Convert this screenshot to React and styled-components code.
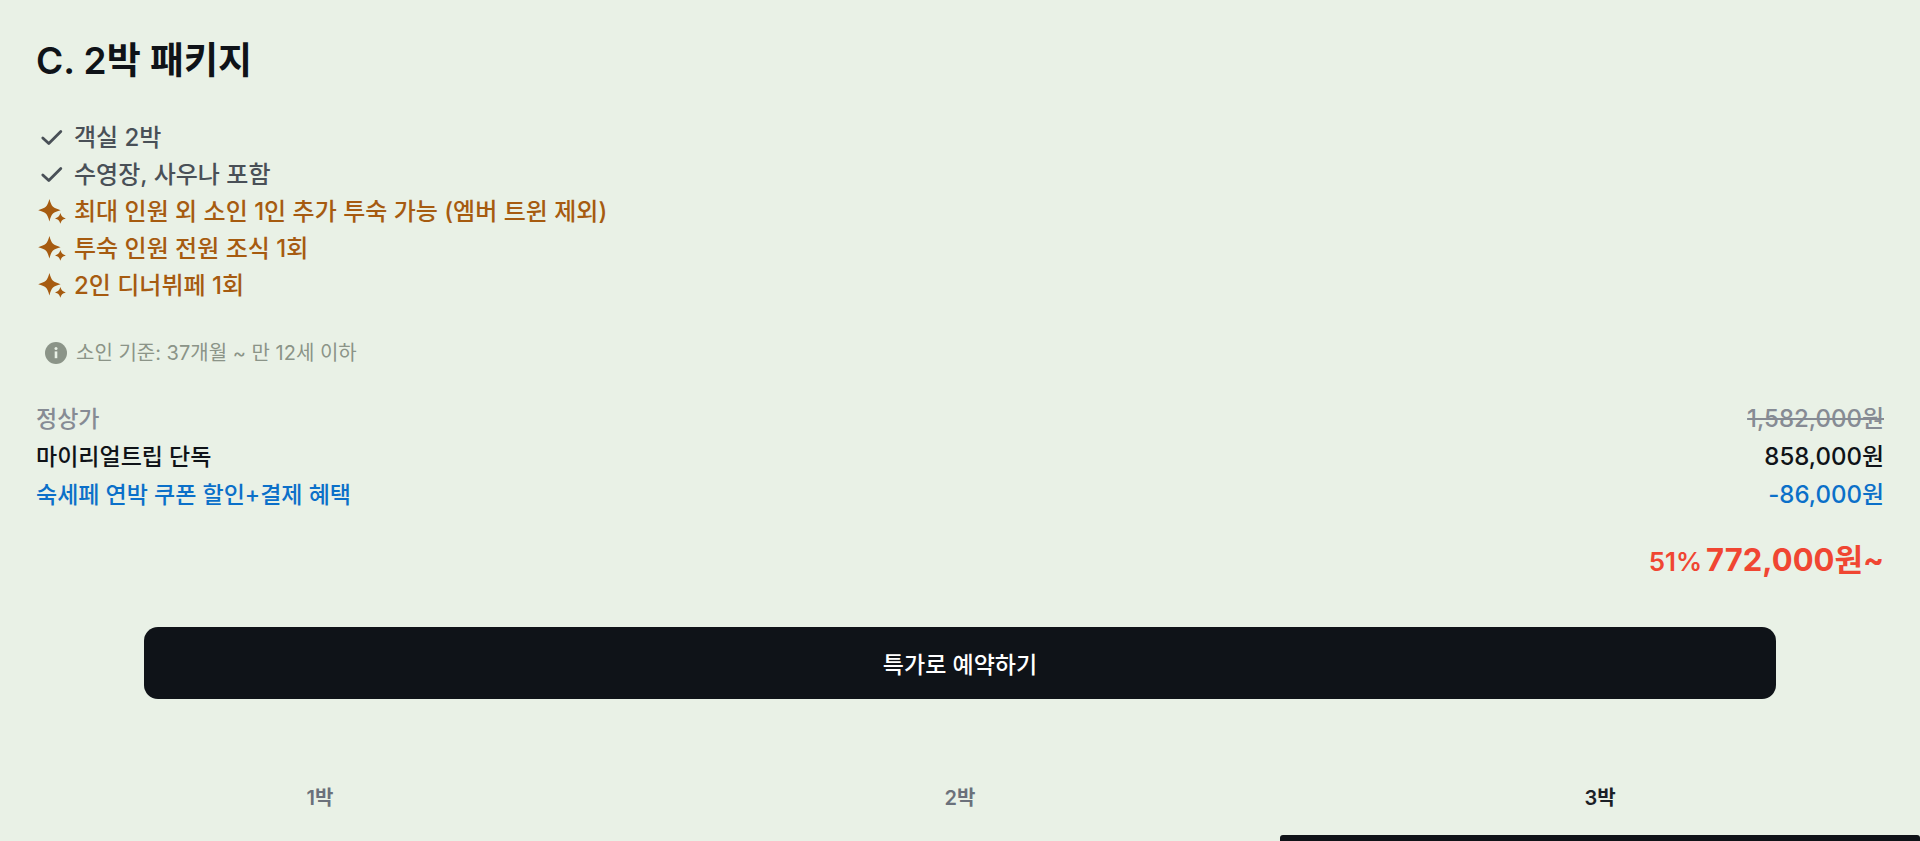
import React, { useState } from 'react'
import styled, { createGlobalStyle } from 'styled-components';

const includes = [
    { text: "객실 2박" },
    { text: "수영장, 사우나 포함" },
    { text: "최대 인원 외 소인 1인 추가 투숙 가능 (엠버 트윈 제외)", special: true },
    { text: "투숙 인원 전원 조식 1회", special: true },
    { text: "2인 디너뷔페 1회", special: true },
]

const prices = [
    { label: "정상가", value: "1,582,000원", color: "#868b94", strike: true },
    { label: "마이리얼트립 단독", value: "858,000원", color: "#0f1318" },
    { label: "숙세페 연박 쿠폰 할인+결제 혜택", value: "-86,000원", color: "#0b70c9" },
]

const nights = ["1박", "2박", "3박"]

const CheckIcon = () => (
    <svg width="28" height="28" viewBox="0 0 28 28" aria-hidden="true">
        <path d="M6.8 14L12.8 19.6L24.8 7.6" fill="none" stroke="currentColor"
            strokeWidth="2.8" strokeLinecap="round" strokeLinejoin="round" />
    </svg>
)

const SparkleIcon = () => (
    <svg width="28" height="28" viewBox="0 0 28 28" fill="currentColor" aria-hidden="true">
        <path d="M13.4 1C14.6 5 15.4 7.2 17 8.8C18.7 10.4 21 11 24.6 12.2C21 13.4 18.7 14 17 15.6C15.4 17.2 14.6 19.4 13.4 23.4C12.2 19.4 11.4 17.2 9.8 15.6C8.1 14 5.8 13.4 2.2 12.2C5.8 11 8.1 10.4 9.8 8.8C11.4 7.2 12.2 5 13.4 1Z" />
        <path d="M24.4 15C25.4 18.2 26.4 19.4 29.8 20.4C26.4 21.4 25.4 22.6 24.4 25.8C23.4 22.6 22.4 21.4 19 20.4C22.4 19.4 23.4 18.2 24.4 15Z" />
    </svg>
)

const InfoIcon = () => (
    <svg width="22" height="22" viewBox="0 0 22 22" aria-hidden="true">
        <circle cx="11" cy="11" r="11" fill="currentColor" />
        <circle cx="11" cy="6.6" r="1.5" fill="#e9f1e6" />
        <rect x="9.7" y="9.4" width="2.6" height="6.8" fill="#e9f1e6" />
    </svg>
)

export default function App() {

    const [selected, setSelected] = useState(2);

    return (
        <Page>
            <GlobalStyle />
            <Package>
                <Title>C. 2박 패키지</Title>
                <IncludeList>
                    {includes.map((item) => (
                        <IncludeItem key={item.text} $special={item.special}>
                            {item.special ? <SparkleIcon /> : <CheckIcon />}
                            <span>{item.text}</span>
                        </IncludeItem>
                    ))}
                </IncludeList>
                <Notice>
                    <InfoIcon />
                    <span>소인 기준: 37개월 ~ 만 12세 이하</span>
                </Notice>
                <PriceList>
                    {prices.map((price) => (
                        <PriceRow key={price.label} $color={price.color}>
                            <dt>{price.label}</dt>
                            <PriceValue $strike={price.strike}>{price.value}</PriceValue>
                        </PriceRow>
                    ))}
                </PriceList>
                <Total>
                    <Percent>51%</Percent>
                    <strong>772,000원~</strong>
                </Total>
            </Package>
            <ReserveButton type="button">특가로 예약하기</ReserveButton>
            <Tabs role="tablist">
                {nights.map((night, index) => (
                    <Tab key={night} type="button" role="tab"
                        aria-selected={selected === index}
                        $active={selected === index}
                        onClick={() => setSelected(index)}
                    >
                        <TabLabel>{night}</TabLabel>
                        <TabBar $active={selected === index} />
                    </Tab>
                ))}
            </Tabs>
        </Page>
    )
}

const GlobalStyle = createGlobalStyle`
  *{
    box-sizing:border-box;
  }
  body{
    margin:0;
    background-color:#e9f1e6;
    color:#0f1318;
    font-family:Inter, "Noto Sans CJK KR", sans-serif;
  }
  button{
    border:none;
    font-family:inherit;
    cursor:pointer;
  }
`;

const Page = styled.main`
  display:flex;
  flex-direction:column;
  height:100vh;
  overflow:hidden;
`;

const Package = styled.section`
  padding:37px 36px 0;
`;

const Title = styled.h2`
  margin:0 0 34px;
  font-size:37px;
  line-height:48px;
  font-weight:600;
`;

const IncludeList = styled.ul`
  margin:0 0 33px;
  padding:0;
  list-style:none;
`;

const IncludeItem = styled.li`
  display:flex;
  align-items:center;
  gap:10px;
  font-size:24px;
  font-weight:500;
  line-height:37px;
  color:${({ $special }) => ($special ? "#a65b10" : "#495057")};
  svg{
    flex:none;
    overflow:visible;
  }
`;

const Notice = styled.p`
  display:flex;
  align-items:center;
  gap:9px;
  margin:0 0 31px;
  padding-left:9px;
  font-size:20px;
  line-height:32px;
  color:#8b9488;
`;

const PriceList = styled.dl`
  margin:0;
`;

const PriceRow = styled.div`
  display:flex;
  justify-content:space-between;
  font-size:23px;
  font-weight:500;
  line-height:38px;
  color:${({ $color }) => $color};
`;

const PriceValue = styled.dd`
  margin:0;
  font-size:24px;
  text-decoration:${({ $strike }) => ($strike ? "line-through" : "none")};
`;

const Total = styled.p`
  display:flex;
  justify-content:flex-end;
  align-items:baseline;
  gap:4px;
  margin:22px 0 0;
  font-size:31px;
  line-height:48px;
  color:#f04632;
  strong{
    font-weight:700;
  }
`;

const Percent = styled.span`
  font-size:26px;
  font-weight:600;
`;

const ReserveButton = styled.button`
  flex:none;
  align-self:center;
  width:85%;
  height:72px;
  margin-top:41px;
  border-radius:14px;
  background-color:#0f1318;
  color:#ffffff;
  font-size:23px;
  font-weight:500;
`;

const Tabs = styled.div`
  display:grid;
  grid-template-columns:repeat(3, 1fr);
  flex:none;
  margin-top:63px;
`;

const Tab = styled.button`
  display:flex;
  flex-direction:column;
  padding:0;
  background-color:transparent;
  color:${({ $active }) => ($active ? "#1b2027" : "#6b717b")};
  font-size:20px;
  font-weight:600;
`;

const TabLabel = styled.span`
  width:100%;
  line-height:73px;
`;

const TabBar = styled.span`
  width:100%;
  height:8px;
  border-radius:3px;
  background-color:${({ $active }) => ($active ? "#0f1318" : "transparent")};
`;
